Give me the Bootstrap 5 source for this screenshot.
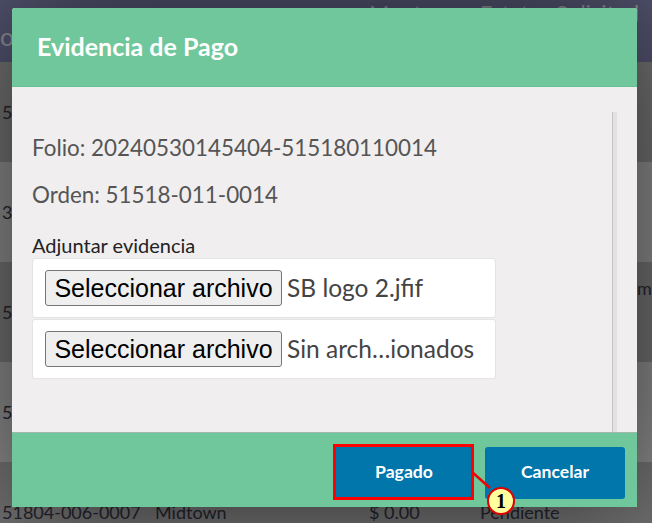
<!doctype html>
<html lang="es"><head><meta charset="utf-8">
<link href="https://cdn.jsdelivr.net/npm/bootstrap@5.3.0/dist/css/bootstrap.min.css" rel="stylesheet">
<style>
html,body{height:523px;overflow:hidden}
body{font-family:Lato,sans-serif;background:#727272;position:relative}
.bk-wrap{height:523px;overflow:hidden;font-size:18px;color:#24242c}
.bk-head{height:62px;background:#52536f;color:#8e8e96;font-size:22px;line-height:24px;padding-top:1px;overflow:hidden}
.bk-row{height:100px;white-space:nowrap;overflow:hidden}
.bk-row.band-a{background:#727272}
.bk-row.band-b{background:#8c8c8c}
.c-a{width:155px;flex:none;padding-left:2px}
.c-b{width:214px;flex:none}
.c-c{width:111px;flex:none}
.c-d{width:157px;flex:none}
.c-e{width:15px;flex:none;overflow:hidden;align-self:flex-start;padding-top:15px;line-height:22px}
.head-o{width:155px;flex:none;font-size:25px;line-height:28px;padding-top:21px}
.dlg{position:absolute;left:12px;top:8px;width:625px;height:499px;background:#f0eeef;border:0;border-radius:3px 3px 0 0;overflow:hidden;box-shadow:0 0 120px rgba(0,0,0,.6)}
.dlg-head.modal-header{height:79px;background:#6fc79b;padding:0 0 2px 25px;flex:none;border-bottom:1px solid #68bd92;border-radius:0}
.dlg-head h5{font-weight:700;font-size:25px;line-height:30px;color:#fff;margin:0}
.dlg-body.modal-body{flex:1;padding:0 20px;color:#555;font-size:22.4px}
.dlg-scroll{position:absolute;right:20px;top:25px;bottom:0;width:5px;background:#e2e2e2;border-left:1px solid #c6c6c6}
.fol{margin:45px 0 0;line-height:32px}
.ord{margin:15px 0 0;line-height:32px}
.lbl.form-label{display:block;margin:23px 0 2px;font-size:20px;line-height:22px;color:#222}
.filebox{width:464px;height:60px;background:#fff;border:1px solid #e4e4e4;border-radius:3px;padding-left:12px;margin-bottom:1px;color:#444;font-size:24.5px;white-space:nowrap}
.filebox button{font-family:"Liberation Sans",sans-serif;font-size:25px;line-height:1;height:36px;width:237px;padding:0;background:#efefef;border:1px solid #767676;border-radius:3px;color:#000;margin-right:5px;white-space:nowrap}
.dlg-foot.modal-footer{height:75px;background:#6fc79b;flex:none;gap:11px;padding:5px 12px 0 0;border-top:1px solid #9fb8aa;border-radius:0;flex-wrap:nowrap}
.dlg-foot .btn.act{width:140px;height:52px;margin:0;padding:0;background:#0076ab;color:#fff;font-weight:700;font-size:17.6px;border:0;border-radius:3px}
.mark-red{position:absolute;left:333px;top:444px;width:141px;height:56px;border:3px solid #f00}
.mark-line{position:absolute;left:470px;top:470px}
.num{position:absolute;left:487px;top:487px;width:28px;height:28px;border-radius:50%;background:#ffff9e;border:2px solid #e00000;color:#000;font:700 20px/24px "Liberation Serif",serif;text-align:center}
</style></head>
<body>
<div class="bk-wrap">
<div class="bk-head d-flex"><div class="head-o">o</div><div class="c-b"></div><div class="c-c">Monto</div><div class="text-nowrap">Estatus Solicitud</div></div>
<div class="bk-row band-a d-flex align-items-center"><div class="c-a">5</div></div>
<div class="bk-row band-b d-flex align-items-center"><div class="c-a">39</div></div>
<div class="bk-row band-a d-flex align-items-center"><div class="c-a">5</div><div class="c-b"></div><div class="c-c"></div><div class="c-d"></div><div class="c-e">me</div></div>
<div class="bk-row band-b d-flex align-items-center"><div class="c-a">5</div></div>
<div class="bk-row band-a d-flex align-items-center"><div class="c-a">51804-006-0007</div><div class="c-b">Midtown</div><div class="c-c">$ 0.00</div><div class="c-d">Pendiente</div></div>
</div>
<div class="modal-content dlg">
<div class="modal-header dlg-head"><h5 class="modal-title">Evidencia de Pago</h5></div>
<div class="modal-body dlg-body"><div class="dlg-scroll"></div>
<p class="fol">Folio: 20240530145404-515180110014</p>
<p class="ord">Orden: 51518-011-0014</p>
<label class="form-label lbl">Adjuntar evidencia</label>
<div class="filebox d-flex align-items-center"><button type="button">Seleccionar archivo</button>SB logo 2.jfif</div>
<div class="filebox d-flex align-items-center"><button type="button">Seleccionar archivo</button>Sin arch…ionados</div>
</div>
<div class="modal-footer dlg-foot"><button class="btn act" type="button">Pagado</button><button class="btn act" type="button">Cancelar</button></div>
</div>
<div class="mark-red"></div>
<svg class="mark-line" width="30" height="30" viewBox="0 0 30 30"><path d="M2 2 L20 18" stroke="#f00000" stroke-width="2.5" fill="none"/></svg>
<div class="num">1</div>
</body></html>
